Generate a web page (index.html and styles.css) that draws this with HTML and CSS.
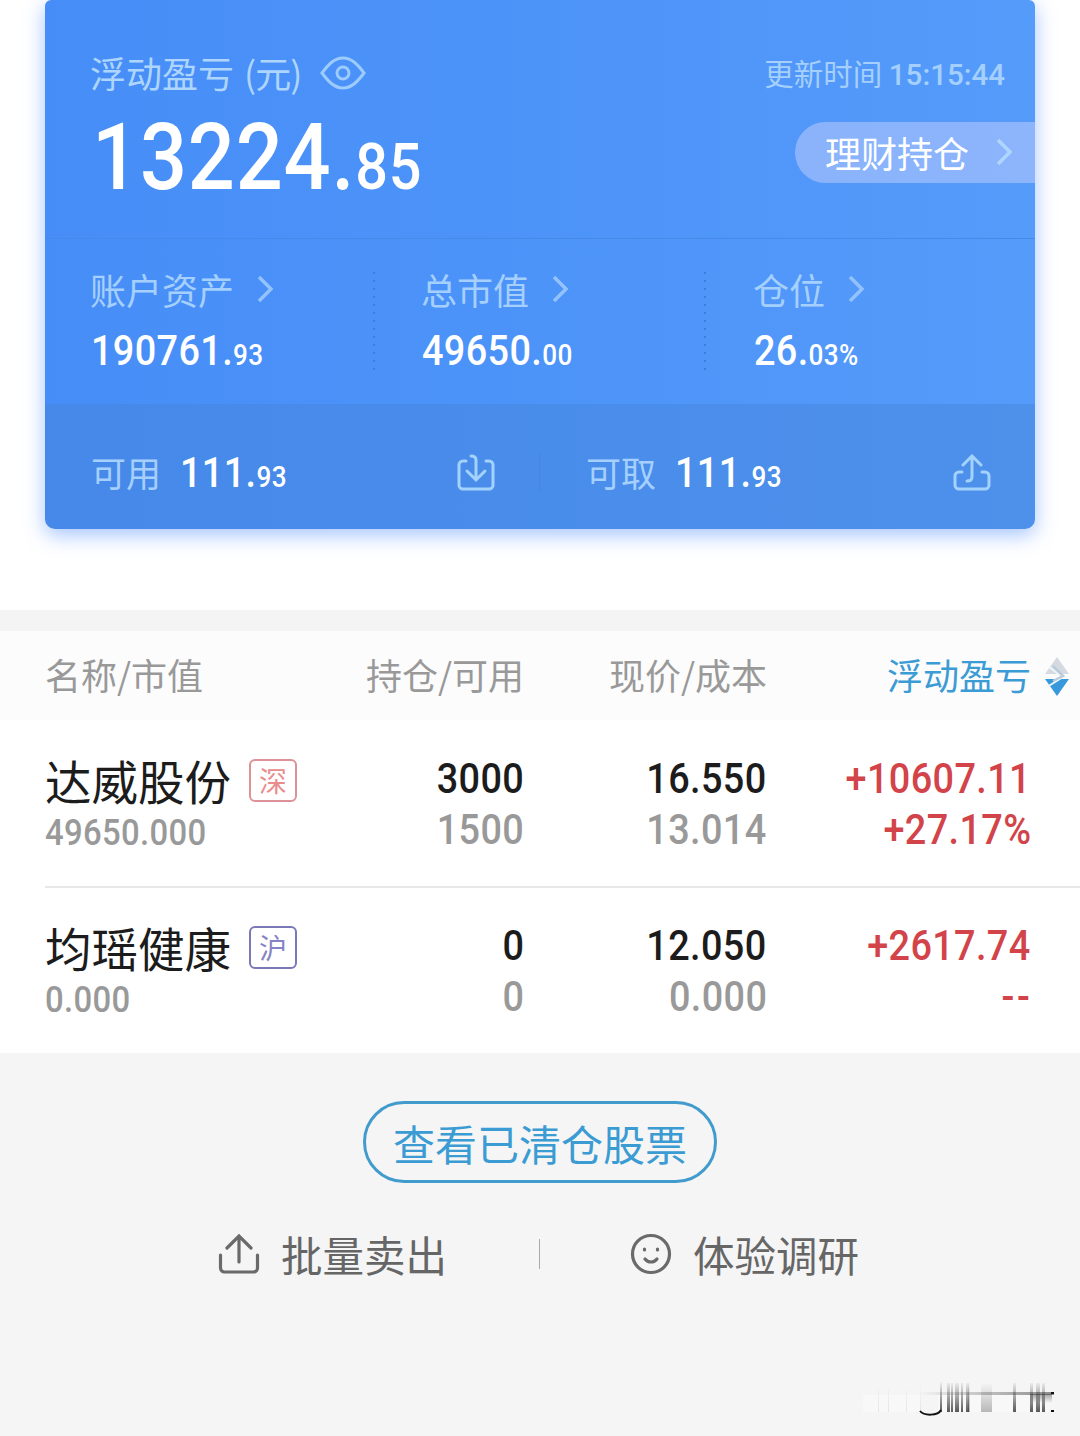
FILE: index.html
```
<!DOCTYPE html>
<html lang="zh-CN">
<head>
    <meta charset="UTF-8">
    <meta name="viewport" content="width=device-width, initial-scale=1.0">
    <title>持仓</title>
    <link rel="stylesheet" href="styles.css">
</head>
<body>

    <!-- Account card -->
    <div class="card-wrap">
        <div class="card">
            <div class="card-top">
                <div class="profit">
                    <div class="profit-title">
                        <span>浮动盈亏</span><span class="unit">(元)</span>
                        <svg class="eye" width="46" height="34" viewBox="0 0 46 34">
                            <path d="M2 17C8 9 14 2 23 2s15 7 21 15c-6 8-12 15-21 15S8 25 2 17z"/>
                            <circle cx="23" cy="17" r="6"/>
                        </svg>
                    </div>
                    <div class="profit-value"><span class="num">13224.<small>85</small></span></div>
                </div>
                <div class="card-side">
                    <div class="update">更新时间 <b>15:15:44</b></div>
                    <a href="#" class="pill"><span>理财持仓</span>
                        <svg class="arrow" width="17" height="28" viewBox="0 0 17 28"><path d="M2 2l12 12L2 26"/></svg>
                    </a>
                </div>
            </div>

            <div class="card-mid">
                <div class="stat">
                    <div class="stat-label">账户资产<svg class="arrow" width="17" height="28" viewBox="0 0 17 28"><path d="M2 2l12 12L2 26"/></svg></div>
                    <div class="stat-value"><span class="num">190761.<small>93</small></span></div>
                </div>
                <div class="stat">
                    <div class="stat-label">总市值<svg class="arrow" width="17" height="28" viewBox="0 0 17 28"><path d="M2 2l12 12L2 26"/></svg></div>
                    <div class="stat-value"><span class="num">49650.<small>00</small></span></div>
                </div>
                <div class="stat">
                    <div class="stat-label">仓位<svg class="arrow" width="17" height="28" viewBox="0 0 17 28"><path d="M2 2l12 12L2 26"/></svg></div>
                    <div class="stat-value"><span class="num">26.<small>03%</small></span></div>
                </div>
            </div>

            <div class="card-bottom">
                <div class="cash">
                    <span class="cash-label">可用</span>
                    <span class="num">111.<small>93</small></span>
                    <svg class="cash-icon" width="38" height="38" viewBox="0 0 38 38">
                        <path d="M9 7H6a4 4 0 0 0-4 4v20a4 4 0 0 0 4 4h26a4 4 0 0 0 4-4V11a4 4 0 0 0-4-4h-3"/>
                        <path d="M14 2c3 0 5 1 5 4v19M10 17l9 9 9-9"/>
                    </svg>
                </div>
                <div class="cash">
                    <span class="cash-label">可取</span>
                    <span class="num">111.<small>93</small></span>
                    <svg class="cash-icon" width="38" height="38" viewBox="0 0 38 38">
                        <path d="M9 18H6a4 4 0 0 0-4 4v9a4 4 0 0 0 4 4h26a4 4 0 0 0 4-4v-9a4 4 0 0 0-4-4h-3"/>
                        <path d="M14 27c3 0 5-1 5-4V3M10 11l9-9 9 9"/>
                    </svg>
                </div>
            </div>
        </div>
    </div>

    <!-- Holdings -->
    <div class="holdings">
        <div class="row head">
            <div>名称/市值</div>
            <div>持仓/可用</div>
            <div>现价/成本</div>
            <div class="sorted">浮动盈亏
                <svg class="sort" width="24" height="40" viewBox="0 0 24 40">
                    <path fill="#d5dae0" d="M12 0l12 17H0z"/>
                    <path fill="#3798dc" d="M0 22h24L12 39z"/>
                    <path fill="none" stroke="#f2f6fa" stroke-width="2" d="M4 10l14 10L2 30"/>
                    <path fill="none" stroke="#b9cbdc" stroke-width="2.500" d="M8 9l10 10-10 5"/>
                </svg>
            </div>
        </div>

        <div class="row stock">
            <div>
                <div class="name"><span>达威股份</span><span class="tag sz">深</span></div>
                <div class="market"><span class="num">49650.000</span></div>
            </div>
            <div>
                <div class="line"><span class="num">3000</span></div>
                <div class="line gray"><span class="num">1500</span></div>
            </div>
            <div>
                <div class="line"><span class="num">16.550</span></div>
                <div class="line gray"><span class="num">13.014</span></div>
            </div>
            <div class="red">
                <div class="line"><span class="num">+10607.11</span></div>
                <div class="line"><span class="num">+27.17%</span></div>
            </div>
        </div>

        <div class="row stock">
            <div>
                <div class="name"><span>均瑶健康</span><span class="tag sh">沪</span></div>
                <div class="market"><span class="num">0.000</span></div>
            </div>
            <div>
                <div class="line"><span class="num">0</span></div>
                <div class="line gray"><span class="num">0</span></div>
            </div>
            <div>
                <div class="line"><span class="num">12.050</span></div>
                <div class="line gray"><span class="num">0.000</span></div>
            </div>
            <div class="red">
                <div class="line"><span class="num">+2617.74</span></div>
                <div class="line"><span class="num none">--</span></div>
            </div>
        </div>
    </div>

    <!-- Footer actions -->
    <div class="footer">
        <a href="#" class="cleared">查看已清仓股票</a>
        <div class="links">
            <a href="#" class="link">
                <svg width="42" height="42" viewBox="0 0 42 42">
                    <path d="M2.500 22v13a4 4 0 0 0 4 4h29a4 4 0 0 0 4-4V22M21 29V4M9 15L21 3l12 12"/>
                </svg>
                <span>批量卖出</span>
            </a>
            <a href="#" class="link">
                <svg width="42" height="42" viewBox="0 0 42 42">
                    <circle cx="21" cy="21" r="18.500"/>
                    <path d="M14.500 16v1M27.500 16v1M15 26c3 4 9 4 12 0"/>
                </svg>
                <span>体验调研</span>
            </a>
        </div>
        <svg class="mark" width="200" height="36" viewBox="0 0 200 36">
            <defs>
                <linearGradient id="fade" x1="0" y1="0" x2="0" y2="1">
                    <stop offset="0" stop-color="#222" stop-opacity="0"/>
                    <stop offset="1" stop-color="#222" stop-opacity=".75"/>
                </linearGradient>
                <linearGradient id="line" x1="0" y1="0" x2="1" y2="0">
                    <stop offset="0" stop-color="#222" stop-opacity="0"/>
                    <stop offset="1" stop-color="#222" stop-opacity=".5"/>
                </linearGradient>
                <linearGradient id="down" x1="0" y1="0" x2="0" y2="1">
                    <stop offset="0" stop-color="#222" stop-opacity=".4"/>
                    <stop offset="1" stop-color="#222" stop-opacity="0"/>
                </linearGradient>
            </defs>
            <path fill="#fff" opacity=".35" d="M5 14h58v17H5zM80 14h112v17H80z"/>
            <path fill="url(#line)" d="M60 11h136v3H60z"/>
            <path fill="url(#down)" d="M172 13h22v9h-22z"/>
            <path fill="url(#fade)" d="M82 0h2v31h-2zM89 2h3v29h-3zM93 2h2v29h-2zM97 2h4v29h-4zM103 2h2v29h-2zM108 2h3v29h-3zM155 2h3v29h-3zM172 2h3v29h-3zM178 2h4v29h-4zM184 2h3v29h-3z"/>
            <path fill="url(#fade)" opacity=".4" d="M123 2h11v29h-11zM110 2h2v29h-2z"/>
            <path fill="url(#fade)" opacity=".12" d="M62 2h1v29h-1zM20 8h1v23h-1zM30 8h1v23h-1zM48 8h1v23h-1z"/>
            <path fill="none" stroke="#111" stroke-width="2" d="M62 30c4 5 18 5 21-1"/>
            <path fill="#111" d="M193 11h3v2h-3zM193 29h3v2h-3z"/>
        </svg>
    </div>

</body>
</html>
```
FILE: styles.css
```
body {
    font-family: "Noto Sans CJK SC", sans-serif;
    margin: 0;
    background-color: #f5f5f5;
    color: #1c1c1c;
}

a {
    text-decoration: none;
    color: inherit;
}

/* Narrow digits */
.num,
.profit-value,
.stat-value,
.market,
.line {
    font-family: Roboto, "Noto Sans CJK SC", sans-serif;
    font-weight: 500;
}

.num {
    display: inline-block;
    transform: scaleX(0.9);
    transform-origin: left;
    letter-spacing: 0.01em;
}

.num small {
    line-height: 1;
}

/* Account card */
.card-wrap {
    height: 610px;
    padding: 0 45px;
    background-color: #fff;
    overflow: hidden;
}

.card {
    height: 529px;
    border-radius: 6px 6px 10px 10px;
    background: linear-gradient(90deg, #478df7, #4c93f9 45%, #559bfa);
    box-shadow: 0 6px 20px rgba(76, 140, 255, 0.5);
    color: #fff;
    overflow: hidden;
}

.card-top {
    display: flex;
    justify-content: space-between;
    height: 188px;
    padding: 50px 0 0 45px;
    border-bottom: 1px solid #458ae8;
}

.profit-title {
    display: flex;
    align-items: center;
    box-sizing: border-box;
    height: 48px;
    padding-bottom: 4px;
    font-size: 36px;
    color: #add5fd;
}

.unit {
    margin-left: 10px;
    letter-spacing: -1px;
}

.eye {
    margin: 2px 0 0 19px;
    fill: none;
    stroke: #9ccbfc;
    stroke-width: 3;
}

.profit-value {
    padding-left: 2px;
    font-size: 92px;
    line-height: 120px;
}

.profit-value small {
    font-size: 64px;
}

.card-side {
    display: flex;
    flex-direction: column;
    align-items: flex-end;
}

.update {
    height: 48px;
    margin-right: 30px;
    line-height: 44px;
    font-size: 29.5px;
    color: #a5d0fd;
}

.update b {
    font-family: Roboto, sans-serif;
    font-weight: 500;
}

.pill {
    display: flex;
    align-items: center;
    justify-content: space-between;
    box-sizing: border-box;
    width: 240px;
    height: 61px;
    margin-top: 24px;
    padding: 0 22px 2px 30px;
    border-radius: 31px 0 0 31px;
    background-color: rgba(200, 210, 255, 0.48);
    font-size: 36px;
}

.arrow {
    fill: none;
    stroke: #93c2fc;
    stroke-width: 3.5;
}

.pill .arrow {
    stroke: #b0d6fd;
}

.card-mid {
    display: grid;
    grid-template-columns: 331px 332px 1fr;
    height: 143px;
    padding: 22px 0 0 45px;
}

.stat-label {
    display: flex;
    align-items: center;
    box-sizing: border-box;
    height: 60px;
    padding-bottom: 4px;
    font-size: 36px;
    color: #a5d0fd;
}

.stat-label .arrow {
    margin: 0 0 0 23px;
}

.stat-value {
    padding-left: 1px;
    font-size: 42px;
    line-height: 60px;
}

.stat-value small,
.cash small {
    font-size: 29px;
}

/* Dotted separators */
.stat:not(:last-child) {
    height: 104px;
    margin-top: 8px;
    background: radial-gradient(circle, #3f7fdc 1.1px, transparent 1.6px) 282px 0 / 4px 8px repeat-y;
}

.stat:not(:last-child) .stat-label {
    margin-top: -8px;
}

.card-bottom {
    display: grid;
    grid-template-columns: 1fr 1fr;
    height: 125px;
    background-color: rgba(70, 130, 215, 0.42);
    align-items: center;
}

.cash {
    display: flex;
    align-items: center;
    height: 40px;
    margin-top: 12px;
    padding: 0 44px 0 46px;
    font-size: 42px;
}

.cash:first-child {
    border-right: 1px solid #4686e4;
}

.cash-label {
    margin-right: 19px;
    padding-bottom: 3px;
    font-size: 35px;
    color: #a5d0fd;
}

.cash-icon {
    margin-left: auto;
    fill: none;
    stroke: #a3d2fc;
    stroke-width: 3;
    stroke-linecap: round;
}

/* Holdings */
.holdings {
    border-top: 21px solid #f4f4f4;
    background-color: #fff;
}

.row {
    display: grid;
    grid-template-columns: 279px 200px 243px 264px;
    padding-left: 45px;
}

.row > div + div {
    text-align: right;
}

.row > div + div .num {
    transform-origin: right;
}

.head {
    height: 89px;
    background-color: #fcfcfc;
    font-size: 36px;
    line-height: 87px;
    color: #999;
}

.head .sorted {
    position: relative;
    color: #3b9bd5;
}

.sort {
    position: absolute;
    left: 278px;
    top: 26px;
}

.stock {
    position: relative;
    height: 166px;
}

.stock + .stock {
    height: 167px;
}

.stock + .stock::before {
    content: "";
    position: absolute;
    left: 45px;
    right: 0;
    top: 0;
    height: 2px;
    background-color: #e8e8e8;
}

.stock > div {
    padding-top: 33px;
}

.stock + .stock > div {
    padding-top: 34px;
}

.name {
    display: flex;
    align-items: center;
    height: 58px;
    font-size: 46.5px;
}

.name span:first-child {
    padding-bottom: 5px;
}

.tag {
    box-sizing: border-box;
    width: 48px;
    height: 43px;
    margin: -3px 0 0 18px;
    border: 2px solid;
    border-radius: 6px;
    font-size: 28px;
    line-height: 39px;
    text-align: center;
}

.sz {
    border-color: #dc9297;
    color: #e98c8c;
}

.sh {
    border-color: #7b78b8;
    color: #8583c4;
}

.market {
    font-size: 36.5px;
    line-height: 44px;
    color: #999;
}

.line {
    font-size: 42px;
    line-height: 51px;
}

.gray {
    color: #999;
}

.red {
    color: #d2434a;
}

.none {
    letter-spacing: 3px;
    margin-right: -2px;
}

/* Footer actions */
.footer {
    position: relative;
    display: flex;
    flex-direction: column;
    align-items: center;
    height: 335px;
    padding-top: 48px;
}

.cleared {
    box-sizing: border-box;
    width: 354px;
    height: 82px;
    border: 3px solid #429bcd;
    border-radius: 41px;
    font-size: 42px;
    line-height: 77px;
    text-align: center;
    color: #3b9bd3;
}

.links {
    display: grid;
    grid-template-columns: 1fr 1fr;
    grid-template-rows: 30px;
    width: 100%;
    margin-top: 56px;
}

.link {
    display: flex;
    align-items: center;
    font-size: 41.5px;
    color: #666;
    padding-left: 218px;
}

.link + .link {
    padding-left: 90px;
    border-left: 1px solid #aaa;
    margin-left: -1px;
}

.link svg {
    margin-right: 21px;
    fill: none;
    stroke: #6a6a6a;
    stroke-width: 3.2;
    stroke-linecap: round;
}

.mark {
    position: absolute;
    right: 22px;
    bottom: 19px;
}
```
